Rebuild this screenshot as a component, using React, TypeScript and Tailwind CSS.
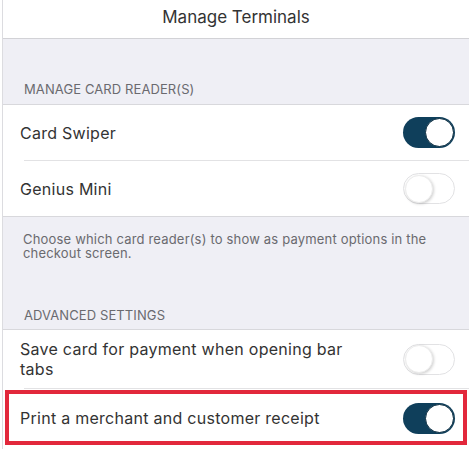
import React from "react";

function Toggle({ on }: { on: boolean }) {
  if (on) {
    return (
      <div className="w-[52px] h-[31px] rounded-full bg-[#0f3f5b] flex items-center justify-end p-[1px] shrink-0">
        <div className="w-[29px] h-[29px] rounded-full bg-white border-[1.5px] border-[#0a2c40]" />
      </div>
    );
  }
  return (
    <div className="w-[52px] h-[31px] rounded-full bg-white border border-[#e2e2e4] flex items-center justify-start p-[1px] shrink-0">
      <div className="w-[28px] h-[28px] rounded-full bg-white border border-[#ececec] shadow-[1px_1px_3px_rgba(0,0,0,0.18)]" />
    </div>
  );
}

export default function App() {
  return (
    <div className="w-[469px] h-[449px] overflow-hidden bg-white pl-[2px] font-['Inter',sans-serif]">
      <div className="h-full border-l border-[#dcdce0] flex flex-col">
        <div className="h-[39px] shrink-0 flex items-center justify-center text-[17px] text-[#333] border-b border-[#d2d2d6] pb-[2px]">
          Manage Terminals
        </div>
        <div className="h-[66px] shrink-0 bg-[#efeff5] border-b border-[#d8d8dc] flex items-end pl-[21px] pb-[7px] text-[13px] leading-[16px] text-[#6a6a6f] tracking-[0.1px]">
          MANAGE CARD READER(S)
        </div>
        <div className="shrink-0 bg-white">
          <div className="h-[55px] flex items-center justify-between pl-[17px] pr-[14px] text-[16px] tracking-[0.27px] text-[#333]">
            <span>Card Swiper</span>
            <Toggle on={true} />
          </div>
          <div className="ml-[21px] h-px bg-[#e2e2e4]" />
          <div className="h-[55px] flex items-center justify-between pl-[17px] pr-[14px] text-[16px] tracking-[0.27px] text-[#333]">
            <span>Genius Mini</span>
            <Toggle on={false} />
          </div>
        </div>
        <div className="h-[114px] shrink-0 bg-[#efeff5] border-y border-[#d8d8dc] flex flex-col justify-between pl-[20px] pr-[20px] pt-[15px] pb-[6px] text-[13px] text-[#6a6a6f]">
          <p className="leading-[14px] tracking-[0.18px]">
            Choose which card reader(s) to show as payment options in the checkout screen.
          </p>
          <div className="leading-[16px] pl-[1px] tracking-[0.1px]">ADVANCED SETTINGS</div>
        </div>
        <div className="shrink-0 bg-white">
          <div className="h-[58px] flex items-center justify-between pl-[17px] pr-[14px] text-[16px] leading-[20px] tracking-[0.27px] text-[#333]">
            <span className="w-[350px]">Save card for payment when opening bar tabs</span>
            <Toggle on={false} />
          </div>
          <div className="ml-[21px] h-px bg-[#e2e2e4]" />
          <div className="relative h-[58px] flex items-center justify-between pl-[17px] pr-[14px] text-[16px] tracking-[0.27px] text-[#333]">
            <span>Print a merchant and customer receipt</span>
            <Toggle on={true} />
            <div className="absolute left-[2px] top-[1px] w-[462px] h-[55px] border-[4px] border-[#e2283b]" />
          </div>
        </div>
      </div>
    </div>
  );
}
